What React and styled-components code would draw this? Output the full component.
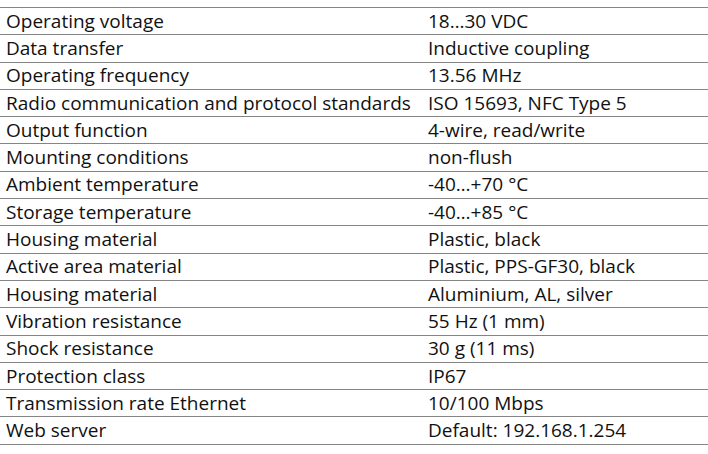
import React from "react";
import styled, { createGlobalStyle } from "styled-components";

const Global = createGlobalStyle`
  html, body { margin: 0; padding: 0; background: #fff; }
  body { font-family: "Open Sans", "Noto Sans", sans-serif; }
`;

const Table = styled.div`
  width: 708px;
  padding-top: 7px;
  display: flex;
  flex-direction: column;
`;

const Row = styled.div`
  display: grid;
  grid-template-columns: 422px 1fr;
  height: 27.31px;
  box-sizing: border-box;
  border-top: 1.3px solid #858585;
  &:last-child { border-bottom: 1.3px solid #858585; height: 28.6px; }
  align-items: center;
`;

const Cell = styled.div`
  padding-left: 6px;
  font-size: 19px;
  letter-spacing: 0;
  color: #111;
  white-space: nowrap;
  line-height: 1;
`;

const data = [
  ["Operating voltage", "18…30 VDC"],
  ["Data transfer", "Inductive coupling"],
  ["Operating frequency", "13.56 MHz"],
  ["Radio communication and protocol standards", "ISO 15693, NFC Type 5"],
  ["Output function", "4-wire, read/write"],
  ["Mounting conditions", "non-flush"],
  ["Ambient temperature", "-40…+70 °C"],
  ["Storage temperature", "-40…+85 °C"],
  ["Housing material", "Plastic, black"],
  ["Active area material", "Plastic, PPS-GF30, black"],
  ["Housing material", "Aluminium, AL, silver"],
  ["Vibration resistance", "55 Hz (1 mm)"],
  ["Shock resistance", "30 g (11 ms)"],
  ["Protection class", "IP67"],
  ["Transmission rate Ethernet", "10/100 Mbps"],
  ["Web server", "Default: 192.168.1.254"],
];

export default function App() {
  return (
    <>
      <Global />
      <Table>
        {data.map(([k, v], i) => (
          <Row key={i}>
            <Cell>{k}</Cell>
            <Cell>{v}</Cell>
          </Row>
        ))}
      </Table>
    </>
  );
}
